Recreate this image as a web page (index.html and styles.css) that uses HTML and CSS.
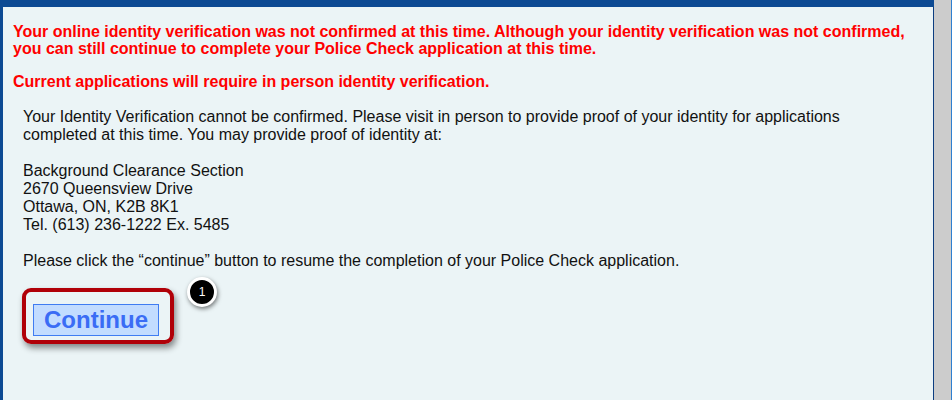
FILE: index.html
```html
<!DOCTYPE html>
<html lang="en">
<head>
    <meta charset="UTF-8">
    <meta name="viewport" content="width=device-width, initial-scale=1.0">
    <title>Police Check - Identity Verification</title>
    <link rel="stylesheet" href="styles.css">
</head>
<body>
    <div class="frame">
        <div class="panel">
            <!-- Avisos em vermelho -->
            <p class="alert">Your online identity verification was not confirmed at this time. Although your identity verification was not confirmed, you can still continue to complete your Police Check application at this time.</p>
            <p class="alert">Current applications will require in person identity verification.</p>

            <div class="info">
                <p>Your Identity Verification cannot be confirmed. Please visit in person to provide proof of your identity for applications completed at this time. You may provide proof of identity at:</p>
                <p>Background Clearance Section<br>
                2670 Queensview Drive<br>
                Ottawa, ON, K2B 8K1<br>
                Tel. (613) 236-1222 Ex. 5485</p>
                <p>Please click the &ldquo;continue&rdquo; button to resume the completion of your Police Check application.</p>

                <div class="action">
                    <button class="continue-btn">Continue</button>
                    <span class="highlight"></span>
                    <span class="step-badge">1</span>
                </div>
            </div>
        </div>
        <div class="scroll-track"></div>
    </div>
</body>
</html>
```

FILE: styles.css
```css
body {
    font-family: "Liberation Sans", Arial, sans-serif;
    margin: 0;
    padding: 0;
    background-color: #0c4a93;
    overflow: hidden;
}
.frame {
    display: flex;
    height: 400px;
    padding-top: 7px;
    box-sizing: border-box;
    border-right: 1px solid #2f7fd0;
}
.panel {
    flex: 1;
    margin-left: 3px;
    background-color: #ebf4f6;
    border-right: 1px solid #0c3d80;
    padding: 16px 10px 0 10px;
    font-size: 16px;
    line-height: 18px;
}
.scroll-track {
    width: 17px;
    background-color: #cccccc;
    margin-top: -7px;
}
.panel p {
    margin: 0 0 18px 0;
}
.panel .alert {
    color: #ff0000;
    font-weight: bold;
    line-height: 17px;
    margin-bottom: 16px;
}
.panel .alert + .alert {
    margin-bottom: 18px;
}
.info {
    padding: 0 20px 0 10px;
    color: #111;
}
.action {
    position: relative;
    display: flex;
    width: max-content;
    margin-left: 10px;
    margin-top: 34px;
}
.continue-btn {
    font-family: "Liberation Sans", Arial, sans-serif;
    font-size: 24px;
    font-weight: bold;
    color: #3a6cf5;
    background-color: #c2dcff;
    border: 1px solid #3f7cf2;
    padding: 1px 10px 2px 10px;
    line-height: 27px;
    cursor: pointer;
}
.highlight {
    position: absolute;
    left: -11px;
    top: -16px;
    width: 144px;
    height: 48px;
    border: 4px solid #b00008;
    border-radius: 9px;
    box-shadow: 2px 4px 6px rgba(0, 0, 0, 0.45);
}
.step-badge {
    position: absolute;
    left: 154px;
    top: -27px;
    width: 24px;
    height: 24px;
    border: 3px solid #fff;
    border-radius: 50%;
    background-color: #000;
    color: #fff;
    font-size: 12px;
    line-height: 24px;
    text-align: center;
    box-shadow: 1px 2px 4px rgba(0, 0, 0, 0.5);
}
```
